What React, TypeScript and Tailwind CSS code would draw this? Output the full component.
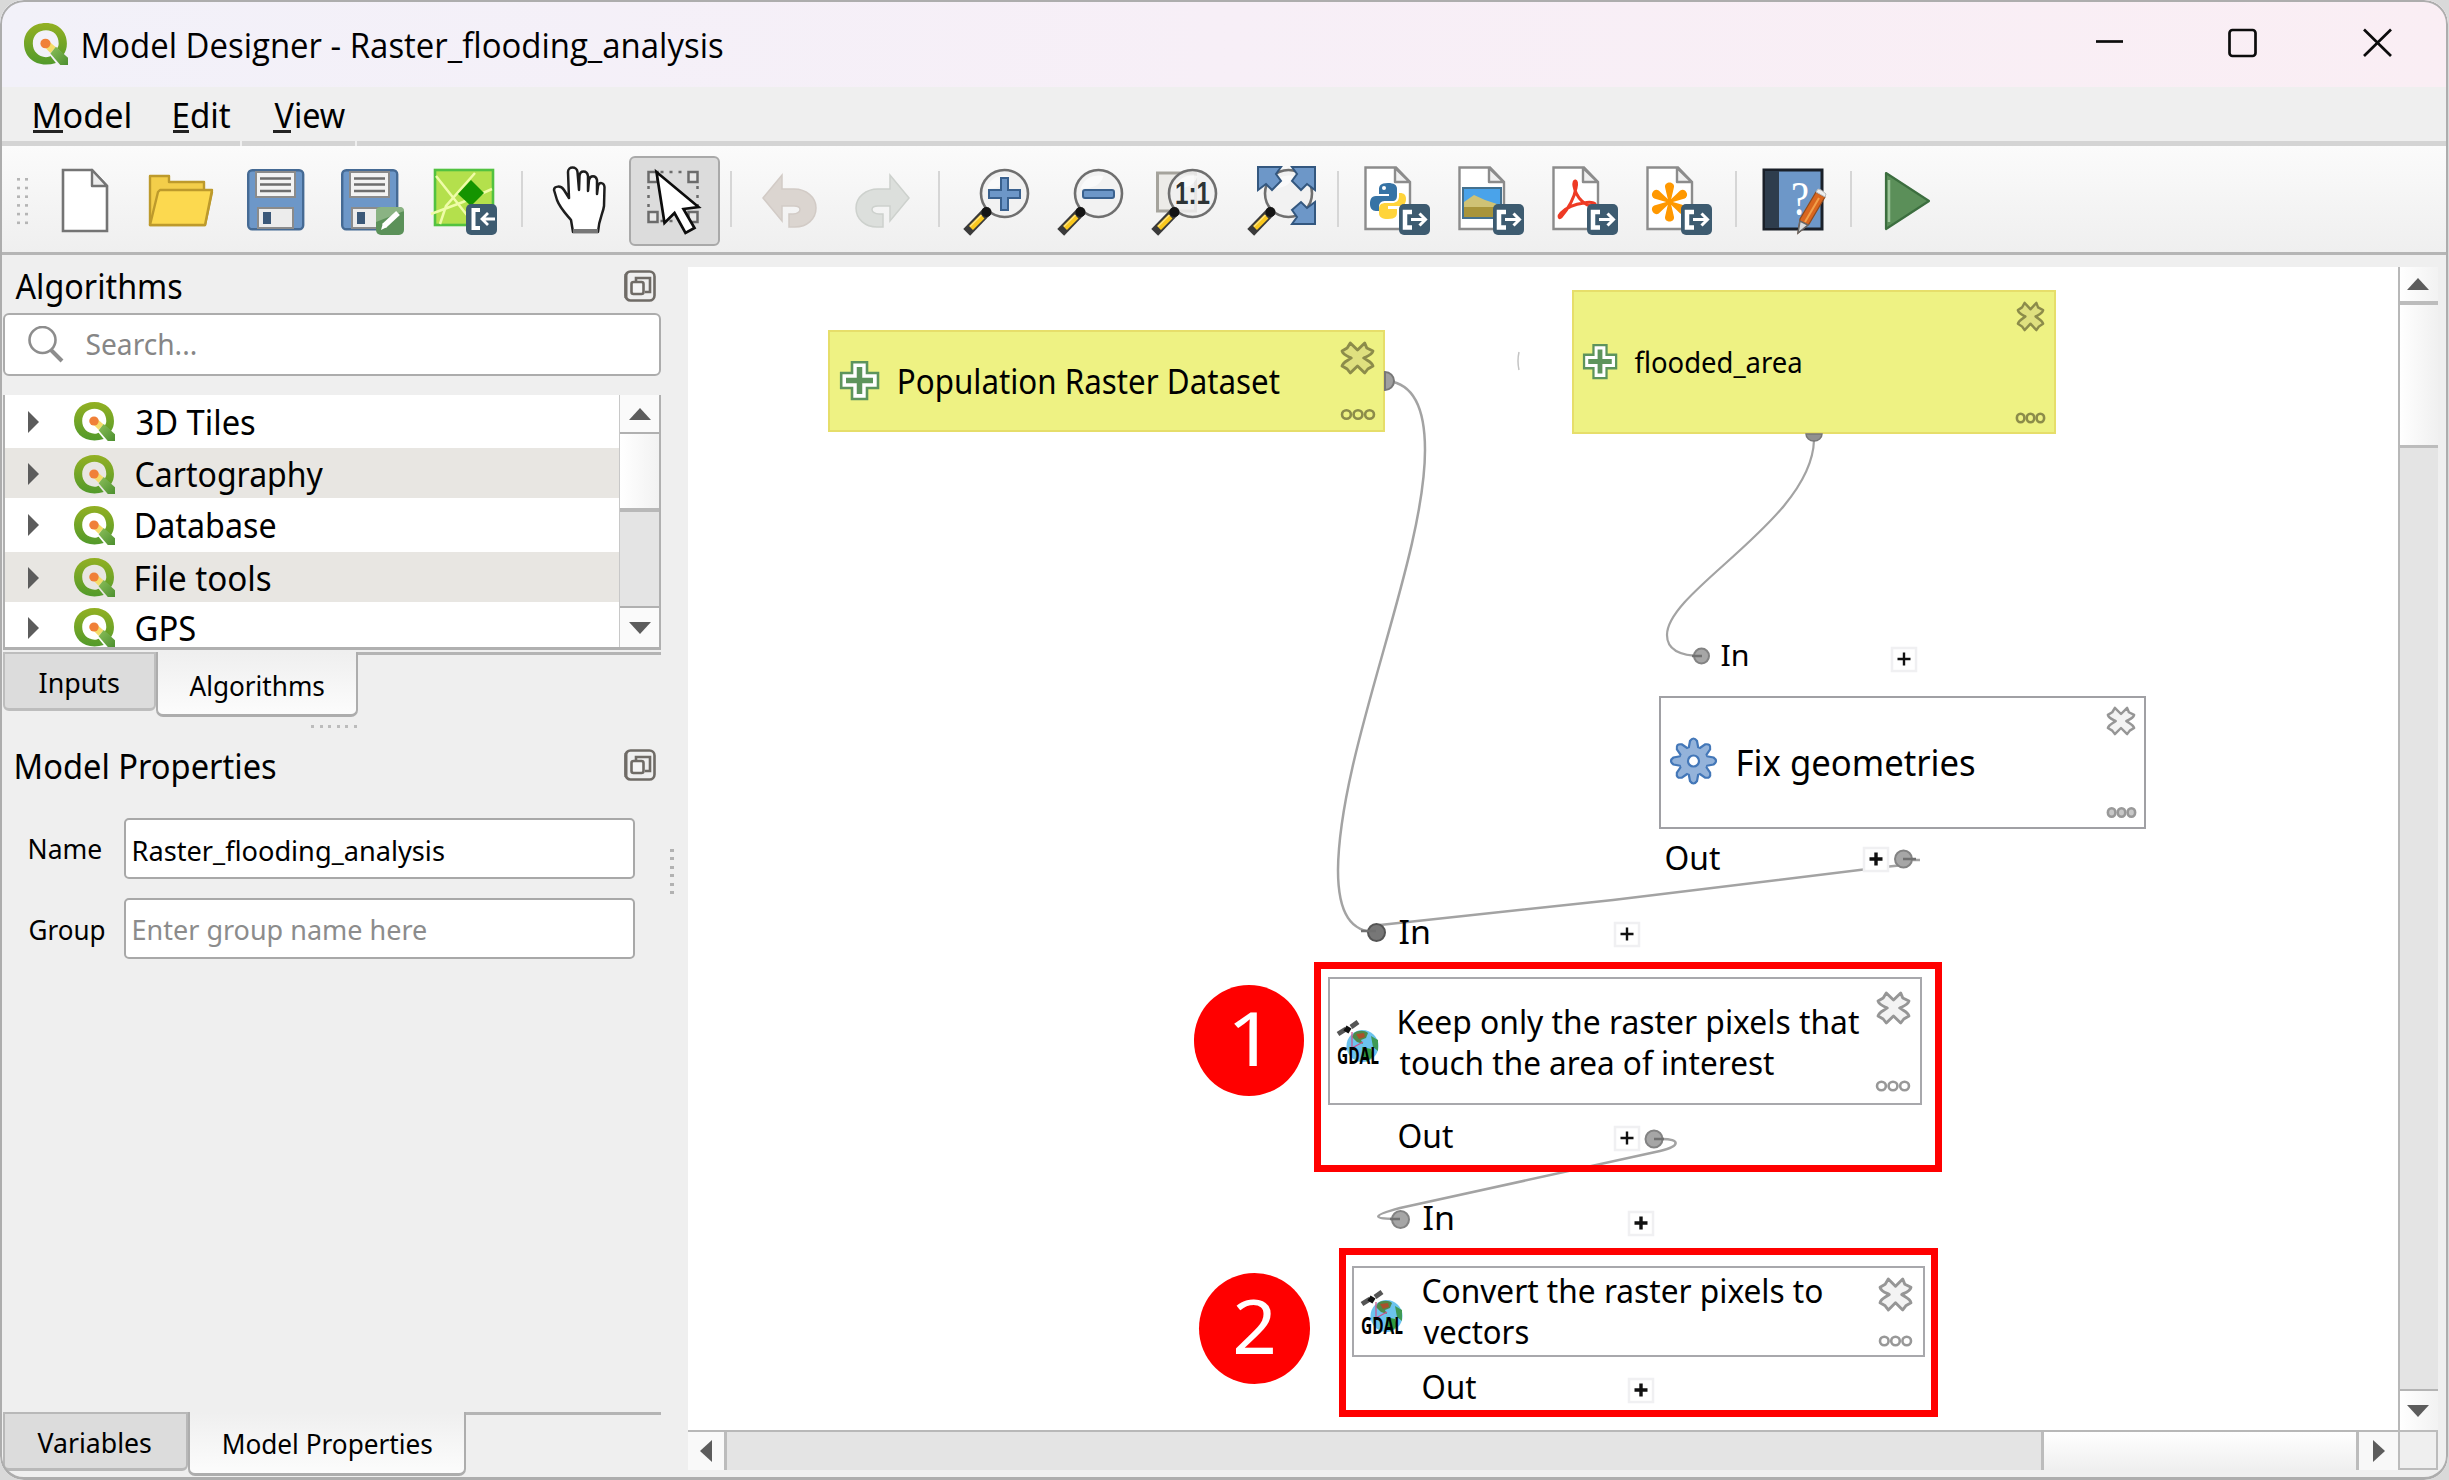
import { useLayoutEffect, useRef } from "react";
import type { ReactNode } from "react";

/* Text whose ink is fitted to an exact width. */
function Fit({ w, className = "", children }: { w: number; className?: string; children: string }) {
  const ref = useRef<HTMLSpanElement>(null);
  useLayoutEffect(() => {
    const el = ref.current;
    if (!el) return;
    const cs = getComputedStyle(el);
    const ctx = document.createElement("canvas").getContext("2d");
    if (!ctx) return;
    ctx.font = `${cs.fontWeight} ${cs.fontSize} ${cs.fontFamily}`;
    const m = ctx.measureText(children);
    const k = w / (m.actualBoundingBoxLeft + m.actualBoundingBoxRight);
    el.style.transform = `translateX(${m.actualBoundingBoxLeft * k + 1.5}px) scaleX(${k})`;
  }, [w, children]);
  return (
    <span className={`block ${className}`} style={{ width: w }}>
      <span ref={ref} className="inline-block origin-left whitespace-pre">
        {children}
      </span>
    </span>
  );
}

function QLogo({ className }: { className: string }) {
  return (
    <svg className={className} viewBox="0 0 40 40" preserveAspectRatio="none">
      <defs>
        <linearGradient id="qg" x1="0" y1="0" x2="0" y2="1">
          <stop offset="0" stopColor="#93b023" />
          <stop offset="1" stopColor="#529a2b" />
        </linearGradient>
        <linearGradient id="qt" x1="0" y1="0" x2="1" y2="1">
          <stop offset="0" stopColor="#8cbf5a" />
          <stop offset="1" stopColor="#4c8f2f" />
        </linearGradient>
      </defs>
      <path fillRule="evenodd" fill="url(#qg)" d="M20 0C31 0 39 8 39 19.500C39 24 38 27 36 30L30 24C31 23 31.500 21.500 31.500 19.500C31.500 12 27 7 20 7C13 7 8 12 8 19.500C8 27 13 32 20 32.500C22 32.500 23 32 24 31.500L29 38C26 39 23 39.500 20 39.500C8 39.500 0 31 0 19.500C0 8 8 0 20 0Z" />
      <path d="M17 17L21 16L29 23L24 28.500L17 21Z" fill="#f5dc6a" />
      <circle cx="19.500" cy="19.500" r="4.600" fill="#f08038" />
      <path d="M24 29L29 22.500L40 33V40H33Z" fill="url(#qt)" />
    </svg>
  );
}

function Slot({ x, w, children, className = "" }: { x: number; w: number; children?: ReactNode; className?: string }) {
  return (
    <svg width={w} height={106} viewBox={`${x} 146 ${w} 106`} className={`block shrink-0 ${className}`}>
      {children}
    </svg>
  );
}

function Sep() {
  return <div className="h-[56px] w-[2px] shrink-0 bg-[#d6d6d6]" />;
}

function Floppy({ x }: { x: number }) {
  return (
    <g transform={`translate(${x} 169)`}>
      <rect x="1.200" y="1.200" width="55" height="59" rx="4" fill="#6d97c8" stroke="#456a94" strokeWidth="2.400" />
      <rect x="9" y="3" width="39" height="25" fill="#f3f3f3" stroke="#8b8b8b" strokeWidth="2" />
      <path d="M13 9.500H44M13 15.500H44M13 22H44" stroke="#6e6e6e" strokeWidth="2.300" />
      <rect x="11" y="39" width="35" height="20" fill="#ececec" stroke="#8b8b8b" strokeWidth="2" />
      <rect x="16" y="43" width="8" height="12" fill="#3b5878" />
    </g>
  );
}

function Page({ x }: { x: number }) {
  return (
    <g transform={`translate(${x} 166)`}>
      <path d="M1.500 1.500H32L46 16V63H1.500Z" fill="#fff" stroke="#8c8c8c" strokeWidth="2.400" />
      <path d="M31 2V16H45.500Z" fill="#f0f0f0" stroke="#8c8c8c" strokeWidth="2.400" strokeLinejoin="round" />
    </g>
  );
}

function ExportBadge({ x }: { x: number }) {
  return (
    <g transform={`translate(${x} 204)`}>
      <rect width="31" height="31" rx="5" fill="#3d5b70" />
      <path d="M13 8H6V23.500H13" fill="none" stroke="#fff" strokeWidth="4.500" />
      <path d="M12 15.500H25M20.500 9.500L26.500 15.500L20.500 21.500" fill="none" stroke="#fff" strokeWidth="3" />
    </g>
  );
}

function Magnifier({ x, children }: { x: number; children?: ReactNode }) {
  return (
    <g transform={`translate(${x} 169)`}>
      {children}
      <ellipse cx="42" cy="24.500" rx="23.500" ry="23.500" fill="#f1f1f1" fillOpacity="0.850" stroke="#6f6f6f" strokeWidth="2.600" />
      <path d="M24 20C27 9 37 5 47 7C44 17 36 19 24 20Z" fill="#fff" opacity="0.600" />
      <path d="M22 45L7.500 60" stroke="#3a3a3a" strokeWidth="9.500" strokeLinecap="square" />
      <path d="M20 47.500L8.500 59" stroke="#fac81e" strokeWidth="5.500" />
      <path d="M19 46L7.500 57.500" stroke="#ffe27a" strokeWidth="1.500" />
      <circle cx="24" cy="43" r="5" fill="#151515" />
    </g>
  );
}

const undoPath = "M0 23L19 0V14H31C43 14 53 22 53 33C53 44 44 52 32 52H26V39H30C34 39 37 37 37 34.500C37 32 35 31 31 31H19V46Z";

function Toolbar() {
  return (
    <div className="flex h-[106px] shrink-0 items-center bg-linear-to-b from-[#fbfbfb] to-[#efefef]">
      <Slot x={0} w={46}>
        {[0, 1, 2, 3, 4, 5].map((i) => (
          <g key={i} fill="#b5b5b5">
            <rect x="17" y={178 + i * 8.700} width="3" height="2.600" />
            <rect x="25" y={178 + i * 8.700} width="3" height="2.600" />
          </g>
        ))}
      </Slot>
      <Slot x={46} w={84}>
        <path d="M63 170H92L107 186V231H63Z" fill="#fff" stroke="#747474" strokeWidth="2.600" />
        <path d="M92 170V186H107Z" fill="#ededed" stroke="#747474" strokeWidth="2.400" strokeLinejoin="round" />
      </Slot>
      <Slot x={130} w={100}>
        <path d="M150 225V176H169V182H204V192H212L205 225Z" fill="#f3ce4a" stroke="#bd9a2c" strokeWidth="2.400" strokeLinejoin="round" />
        <path d="M150 225L158 192L160 190H212L205 225Z" fill="#fcd94f" stroke="#bd9a2c" strokeWidth="2.400" strokeLinejoin="round" />
      </Slot>
      <Slot x={230} w={92}><Floppy x={247} /></Slot>
      <Slot x={322} w={96}>
        <Floppy x={341} />
        <rect x="376" y="207" width="28" height="28" rx="5" fill="#5b9159" />
        <path d="M376 222V211Q376 207 381 207H400Q404 207 404 211Z" fill="#8ab383" />
        <path d="M384 226L398 213" stroke="#fff" strokeWidth="5.500" />
        <path d="M381 230L383 223L387 227Z" fill="#fff" />
      </Slot>
      <Slot x={418} w={103}>
        <rect x="435" y="170" width="58" height="55" fill="#b4e04c" stroke="#52c240" strokeWidth="2.600" />
        <path d="M436 176L474 224M475 173L446 206L440 224M431 214L463 202L492 189" stroke="#effca8" strokeWidth="2.500" fill="none" />
        <path d="M471 180L484 193L471 206L458 194Z" fill="#159400" />
        <rect x="466" y="204" width="31" height="31" rx="5" fill="#3d5b70" />
        <path d="M480 210H473.500V228H480" fill="none" stroke="#fff" strokeWidth="4" />
        <path d="M495 219H482M488 213L482 219L488 225" fill="none" stroke="#fff" strokeWidth="2.800" />
      </Slot>
      <Sep />
      <Slot x={523} w={106}>
        <path d="M573 232L571 220C566 214 560 208 557 200L554 190C554 186 561 185 564 190L569 198L568 172C568 166 577 166 577.500 172L579 190L579.500 176C580 170 587 170 588 176L588 191L589 180C590 175 596 175 597 180L597 194L598 186C599 182 604 182 604.500 187L604 206C603 214 599 218 598 232Z" fill="#fff" stroke="#1e1e1e" strokeWidth="2.500" strokeLinejoin="round" />
        <path d="M573 231H598" stroke="#777" strokeWidth="4" />
      </Slot>
      <div className="mt-[4px] flex h-[90px] w-[91px] shrink-0 items-center justify-center rounded-[6px] border-[2.500px] border-[#a9a9a9] bg-[#dcdcdc]">
        <svg className="block shrink-0" width="86" height="86" viewBox="630.5 159 86 86">
          <path d="M659 173H686M659 222H686M647 187V210M696 187V210" stroke="#6b6b6b" strokeWidth="2.500" strokeDasharray="3 6" />
          <g fill="#e8e8e8" stroke="#6b6b6b" strokeWidth="2.500">
            <rect x="647" y="173" width="9" height="10" />
            <rect x="687" y="173" width="9" height="10" />
            <rect x="647" y="213" width="9" height="10" />
            <rect x="687" y="213" width="9" height="10" />
          </g>
          <path d="M655 173L663 224L673 214L684 234L693 229L682 210L697 208Z" fill="#fff" stroke="#0c0c0c" strokeWidth="2.700" />
        </svg>
      </div>
      <div className="w-[10px] shrink-0" />
      <Sep />
      <Slot x={732} w={206}>
        <g transform="translate(763 175)"><path d={undoPath} fill="#dbd5d0" stroke="#d2cbc6" strokeWidth="1.500" /></g>
        <g transform="translate(909 175) scale(-1 1)"><path d={undoPath} fill="#dcdfdc" stroke="#cdd1cd" strokeWidth="1.500" /></g>
      </Slot>
      <Sep />
      <Slot x={940} w={103}>
        <Magnifier x={962.5} />
        <path d="M1001 178H1008V190H1020V198H1008V210H1001V198H989V190H1001Z" fill="#6d97c8" stroke="#3a618e" strokeWidth="2" />
      </Slot>
      <Slot x={1043} w={94}>
        <Magnifier x={1056.5} />
        <rect x="1083" y="190" width="31" height="8" rx="2" fill="#6d97c8" stroke="#3a618e" strokeWidth="2" />
      </Slot>
      <Slot x={1137} w={94}>
        <Magnifier x={1150.5}>
          <rect x="7" y="4" width="38" height="38" fill="#ecebe8" stroke="#a5a39c" strokeWidth="3" />
        </Magnifier>
        <text x="1175" y="204" textLength="35" lengthAdjust="spacingAndGlyphs" className="fill-[#2d3436] font-['Liberation_Sans'] text-[31px] font-bold">1:1</text>
      </Slot>
      <Slot x={1231} w={106}>
        <Magnifier x={1246.5} />
        <g fill="#6d97c8" stroke="#33577f" strokeWidth="2">
          <path d="M1258 167H1281L1276 174L1281 181L1272 190L1266 184L1258 190Z" />
          <path d="M1315 167H1292L1297 174L1292 181L1301 190L1307 184L1315 190Z" />
          <path d="M1315 224H1292L1297 217L1292 210L1301 202L1307 208L1315 202Z" />
        </g>
      </Slot>
      <Sep />
      <Slot x={1339} w={106}>
        <Page x={1364} />
        <path d="M1388 183C1380 183 1379 186 1379 190V194H1389V196H1376C1371 196 1370 200 1370 204C1370 208 1372 211 1376 211H1379V207C1379 202 1382 201 1386 201H1392C1396 201 1397 199 1397 195V189C1397 185 1394 183 1388 183Z" fill="#3673a5" />
        <path d="M1388 219C1396 219 1397 216 1397 212V209H1388V206H1400C1405 206 1406 202 1406 199C1406 195 1404 193 1400 193H1399V196C1399 201 1396 203 1392 203H1386C1381 203 1379 205 1379 209V213C1379 217 1382 219 1388 219Z" fill="#ffd43b" />
        <circle cx="1384" cy="188" r="2" fill="#fff" />
        <ExportBadge x={1399} />
      </Slot>
      <Slot x={1445} w={94}>
        <Page x={1458} />
        <rect x="1463" y="188" width="38" height="30" fill="#4aa3ea" stroke="#44718f" strokeWidth="2" />
        <path d="M1464 202L1474 195L1485 200L1500 205V217H1464Z" fill="#cfc275" />
        <path d="M1464 207H1500V217H1464Z" fill="#a8943a" />
        <ExportBadge x={1493} />
      </Slot>
      <Slot x={1539} w={94}>
        <Page x={1552} />
        <path d="M1561 217C1567 210 1574 199 1576 188C1578 179 1573 179 1574 186C1576 198 1586 207 1594 206C1598 204 1592 201 1584 203C1575 204 1566 208 1561 213C1558 216 1559 219 1561 217Z" fill="none" stroke="#ee3a24" strokeWidth="3" />
        <ExportBadge x={1587} />
      </Slot>
      <Slot x={1633} w={102}>
        <Page x={1646} />
        <g fill="#ff9800" transform="translate(1669.500 202)">
          {[0, 60, 120, 180, 240, 300].map((a) => (
            <path key={a} d="M-1.500 -2L-4.500 -15C-5 -21 5 -21 4.500 -15L1.500 -2Z" transform={`rotate(${a})`} />
          ))}
          <circle r="3" />
        </g>
        <ExportBadge x={1681} />
      </Slot>
      <Sep />
      <Slot x={1737} w={113}>
        <rect x="1764" y="170" width="58" height="59" fill="#6d97c8" stroke="#1a2029" strokeWidth="3" />
        <rect x="1765" y="171" width="14" height="57" fill="#2e3d4d" />
        <text x="1791" y="215" textLength="18" lengthAdjust="spacingAndGlyphs" className="fill-white font-['Liberation_Serif'] text-[48px]">?</text>
        <path d="M1798 233L1800 219L1816 192L1825 197L1809 224Z" fill="#d9661f" stroke="#8f4a1c" strokeWidth="1.200" />
        <path d="M1805 222L1819 198" stroke="#f2a04a" strokeWidth="2" />
        <path d="M1816 192L1818 189Q1821 189 1826 194L1825 197Z" fill="#eee" stroke="#bbb" />
        <path d="M1798 233L1800 221L1808 225Z" fill="#dcdcdc" stroke="#666" strokeWidth="1.500" />
      </Slot>
      <Sep />
      <Slot x={1852} w={94}>
        <path d="M1886 173L1929 201L1886 229Z" fill="#5b8f59" stroke="#3c6e3f" strokeWidth="2.200" strokeLinejoin="round" />
        <path d="M1889 180V222" stroke="#9cc498" strokeWidth="2.500" />
      </Slot>
    </div>
  );
}

function FloatIcon() {
  return (
    <svg width="32" height="32" viewBox="0 0 32 32" className="block shrink-0" fill="none" stroke="#6f6b66">
      <rect x="1.500" y="1.500" width="29" height="29" rx="5" strokeWidth="2.600" />
      <path d="M2 4V28" strokeWidth="3" />
      <path d="M12 12V8H26V22H21" strokeWidth="2.600" />
      <rect x="7.500" y="12" width="12" height="12" rx="2" strokeWidth="2.600" fill="#f4f4f4" />
    </svg>
  );
}

const treeRows: { label: string; w: number; row: string }[] = [
  { label: "3D Tiles", w: 118, row: "h-[53px] bg-white" },
  { label: "Cartography", w: 187, row: "h-[50px] pt-[2px] bg-[#e8e6e2]" },
  { label: "Database", w: 139, row: "h-[54px] bg-white" },
  { label: "File tools", w: 134, row: "h-[50px] pt-[1px] bg-[#e8e6e2]" },
  { label: "GPS", w: 59, row: "h-[51px] bg-white" },
];

function Tri({ dir }: { dir: "up" | "down" | "left" | "right" }) {
  const d = { up: "M0 12L11 0L22 12Z", down: "M0 0H22L11 12Z", left: "M12 0V22L0 11Z", right: "M0 0V22L12 11Z" }[dir];
  const v = dir === "up" || dir === "down";
  return (
    <svg width={v ? 22 : 12} height={v ? 12 : 22} className="block shrink-0">
      <path d={d} fill="#5c5c5c" />
    </svg>
  );
}

function SidePanel() {
  return (
    <div className="flex w-[688px] shrink-0 flex-col pl-[3px]">
      <div className="flex h-[58px] items-end justify-between pr-[32px] pb-[11px] pl-[11px]">
        <Fit w={166} className="translate-y-[6px] text-[34px] leading-[43px]">Algorithms</Fit>
        <FloatIcon />
      </div>
      <div className="flex h-[63px] w-[658px] items-center rounded-[6px] border-[2.500px] border-[#acacac] bg-white pl-[23px]">
        <svg width="36" height="37" viewBox="0 0 36 37" fill="none" stroke="#8d8d8d" className="block">
          <circle cx="14.500" cy="14" r="13" strokeWidth="2.600" />
          <path d="M23 24L34 35" strokeWidth="4" />
        </svg>
        <Fit w={109} className="ml-[21px] -translate-y-[1px] text-[29px] leading-none text-[#868686]">Search...</Fit>
      </div>
      <div className="mt-[19px] flex h-[255px] w-[658px] border-x-2 border-b-[3px] border-[#b0b0b0] bg-white">
        <div className="flex flex-1 flex-col overflow-hidden">
          {treeRows.map((r) => (
            <div key={r.label} className={`flex shrink-0 items-center pl-[23px] ${r.row}`}>
              <svg width="11" height="22" className="block"><path d="M0 0V22L11 11Z" fill="#5c5c5c" /></svg>
              <QLogo className="ml-[35px] h-[39px] w-[41px]" />
              <Fit w={r.w} className="ml-[20px] text-[34px] leading-none">{r.label}</Fit>
            </div>
          ))}
        </div>
        <div className="flex w-[40px] flex-col border-l border-[#c8c8c8]">
          <div className="flex h-[39px] items-center justify-center border-b-2 border-[#b0b0b0] bg-[#fafafa]"><Tri dir="up" /></div>
          <div className="h-[78px] border-b-[4px] border-[#b8b8b8] bg-linear-to-r from-white to-[#f2f2f2]" />
          <div className="flex-1 bg-[#e4e4e4]" />
          <div className="flex h-[41px] items-center justify-center border-t-2 border-[#b0b0b0] bg-[#fafafa]"><Tri dir="down" /></div>
        </div>
      </div>
      <div className="mt-[2px] flex h-[65px] w-[658px] items-start">
        <div className="flex h-[59px] w-[153px] items-center rounded-b-[6px] border-2 border-b-[3px] border-[#bdbdbd] bg-[#dcdcdc] pt-[2px] pl-[33px]">
          <Fit w={80} className="text-[28px] leading-none">Inputs</Fit>
        </div>
        <div className="flex h-[65px] w-[202px] items-center rounded-b-[7px] border-x-2 border-b-[3px] border-[#adadad] bg-linear-to-b from-[#efefef] to-[#fcfcfc] pt-[3px] pl-[30px]">
          <Fit w={135} className="text-[28px] leading-none">Algorithms</Fit>
        </div>
        <div className="h-[3px] flex-1 bg-[#b4b4b4]" />
      </div>
      <div className="mt-[8px] ml-[308px] flex gap-[5.500px]">
        {[0, 1, 2, 3, 4, 5].map((i) => <div key={i} className="size-[3px] bg-[#bcbcbc]" />)}
      </div>
      <div className="mt-[20px] flex h-[34px] items-center justify-between pr-[32px] pl-[12px]">
        <Fit w={259} className="translate-y-[1px] text-[34px] leading-none">Model Properties</Fit>
        <FloatIcon />
      </div>
      <div className="mt-[36px] flex items-center">
        <div className="flex flex-col gap-[19px]">
          <div className="flex h-[61px] items-center pl-[25px]">
            <Fit w={72} className="-translate-y-[1px] text-[28px] leading-none">Name</Fit>
            <div className="ml-[24px] flex h-[61px] w-[511px] items-center rounded-[5px] border-[2.500px] border-[#a8a8a8] bg-white pl-[6px]">
              <Fit w={311} className="translate-y-[1px] text-[28px] leading-none">Raster_flooding_analysis</Fit>
            </div>
          </div>
          <div className="flex h-[61px] items-center pl-[25px]">
            <Fit w={75} className="text-[28px] leading-none">Group</Fit>
            <div className="ml-[21px] flex h-[61px] w-[511px] items-center rounded-[5px] border-[2.500px] border-[#a8a8a8] bg-white pl-[6px]">
              <Fit w={293} className="text-[28px] leading-none text-[#8c8c8c]">Enter group name here</Fit>
            </div>
          </div>
        </div>
        <div className="mb-[34px] ml-[35px] flex flex-col gap-[5.500px]">
          {[0, 1, 2, 3, 4, 5].map((i) => <div key={i} className="h-[3px] w-[4px] bg-[#b2b2b2]" />)}
        </div>
      </div>
      <div className="mt-auto mb-[3px] flex h-[65px] w-[658px] items-start">
        <div className="flex h-[59px] w-[185px] items-center rounded-b-[6px] border-2 border-b-[3px] border-[#b8b8b8] bg-[#dcdcdc] pt-[1px] pl-[31px]">
          <Fit w={114} className="text-[28px] leading-none">Variables</Fit>
        </div>
        <div className="flex h-[64px] w-[278px] items-center rounded-b-[7px] border-x-2 border-b-[3px] border-[#adadad] bg-linear-to-b from-[#efefef] to-[#fcfcfc] pt-[1px] pl-[32px]">
          <Fit w={209} className="text-[28px] leading-none">Model Properties</Fit>
        </div>
        <div className="h-[2.500px] flex-1 bg-[#b4b4b4]" />
      </div>
    </div>
  );
}

function CloseX({ x, y, w, h, c }: { x: number; y: number; w: number; h: number; c: string }) {
  return (
    <g transform={`translate(${x} ${y}) scale(${w / 32} ${h / 32})`}>
      <path d="M9 1L16 8L23 1L25 6L31 9C30 13 26 14 22 16C26 19 30 20 31 24L26 27L23 31L16 24L9 31L6 27L1 24C2 20 6 19 10 16C6 14 2 13 1 9L6 6Z" fill={c === "y" ? "#dfe07f" : "#f3f3f3"} stroke={c === "y" ? "#8c8c4a" : "#969696"} strokeWidth="2.800" strokeLinejoin="round" />
    </g>
  );
}

function Dots({ x, y, w, c, fill = "none" }: { x: number; y: number; w: number; c: string; fill?: string }) {
  return (
    <g fill={fill} stroke={c} strokeWidth="2.600">
      {[0, 1, 2].map((i) => <ellipse key={i} cx={x + w * (0.160 + i * 0.340)} cy={y} rx={w * 0.130} ry="4.300" />)}
    </g>
  );
}

function AddPort({ x, y, bold }: { x: number; y: number; bold?: boolean }) {
  return (
    <g>
      <rect x={x - 12} y={y - 11} width="24" height="23" fill="#fff" stroke="#f0f0f2" strokeWidth="2.500" />
      <path d={`M${x - 6.500} ${y}H${x + 6.500}M${x} ${y - 6.500}V${y + 6.500}`} stroke="#111" strokeWidth={bold ? 3.4 : 2.4} />
    </g>
  );
}

function PlusIcon({ x, y, w, h }: { x: number; y: number; w: number; h: number }) {
  return (
    <g transform={`translate(${x} ${y}) scale(${w / 39} ${h / 39})`}>
      <path d="M12 1.200H27V12H38V27H27V38H12V27H1.200V12H12Z" fill="#fff" stroke="#5d945c" strokeWidth="2.600" />
      <path d="M19.500 6V33M6 19.500H33" stroke="#5d945c" strokeWidth="5.500" />
    </g>
  );
}

function Gdal({ x, y }: { x: number; y: number }) {
  return (
    <g transform={`translate(${x} ${y})`}>
      <circle cx="25.500" cy="26" r="16" fill="#6cc3ee" />
      <path d="M17 13C21 10 28 10 31 13L29 18L24 20L26 24L20 22L15 17Z" fill="#4d8a4a" />
      <path d="M19 14L27 13L28 17L22 19Z" fill="#a8512c" />
      <path d="M34 16L41 20V31L36 27Z" fill="#3f9a55" />
      <path d="M25 27L34 29L36 36L30 42L26 36Z" fill="#2f9a3e" />
      <path d="M15 12V28L26 22" stroke="#d0508a" strokeWidth="1.200" fill="none" />
      <path d="M1 14L9 9M14 7L21 2" stroke="#555" strokeWidth="5" />
      <path d="M8 8L13 11" stroke="#111" strokeWidth="6" />
      <text x="0" y="43.500" textLength="42" lengthAdjust="spacingAndGlyphs" className="fill-black font-['Open_Sans'] text-[23px] font-bold">GDAL</text>
    </g>
  );
}

function Gear() {
  return (
    <g transform="translate(1693.500 761)" fill="#94b3da" stroke="#4377b8" strokeWidth="2.200">
      {[0, 45, 90, 135, 180, 225, 270, 315].map((a) => (
        <path key={a} d="M-5 -12L-3.500 -20Q0 -25 3.500 -20L5 -12" transform={`rotate(${a})`} />
      ))}
      <circle r="13.500" stroke="none" />
      <circle r="5.500" fill="#fff" />
    </g>
  );
}

function Label({ at, w, children }: { at: string; w: number; children: string }) {
  return <div className={`absolute leading-none ${at}`}><Fit w={w}>{children}</Fit></div>;
}

function Scene() {
  return (
    <div className="absolute -top-[267px] -left-[688px] h-[1480px] w-[2449px]">
      <div className="absolute top-[330px] left-[828px] h-[102px] w-[557px] border-2 border-[#e6de6a] bg-[#eef283]" />
      <div className="absolute top-[290px] left-[1572px] h-[144px] w-[484px] border-2 border-[#e6de6a] bg-[#eef283]" />
      <div className="absolute top-[696px] left-[1659px] h-[133px] w-[487px] border-2 border-[#a0a0a4] bg-white" />
      <div className="absolute top-[977px] left-[1328px] h-[128px] w-[594px] border-2 border-[#a8a8ac] bg-white" />
      <div className="absolute top-[1266px] left-[1352px] h-[91px] w-[573px] border-2 border-[#a8a8ac] bg-white" />
      <svg className="absolute inset-0" width="2449" height="1480">
        <g fill="none" stroke="#a3a3a3" strokeWidth="2.500">
          <path d="M1388 381C1414 384 1425 410 1425 450C1425 560 1339 750 1338 870C1338 915 1352 932 1376 932" />
          <path d="M1814 440C1812 520 1667 590 1667 635C1667 650 1680 656 1702 656" strokeWidth="2.200" />
          <path d="M1920 860H1903M1904 865L1884 867L1613 900L1380 925" />
          <path d="M1654 1139H1662C1680 1139 1681 1146 1660 1151L1400 1208C1370 1216 1372 1219 1400 1219" />
        </g>
        <path d="M1519 352Q1517 361 1519 370" stroke="#c4c4c4" strokeWidth="1.500" fill="none" />
        <path d="M1385 372A9 9 0 0 1 1385 390Z" fill="#a0a0a0" stroke="#777" strokeWidth="2" />
        <path d="M1806 434A8 7 0 0 0 1822 434Z" fill="#909090" stroke="#777" strokeWidth="1.500" />
        <g fill="#a6a6a6" stroke="#838383" strokeWidth="2">
          <circle cx="1701.500" cy="656" r="7.500" />
          <circle cx="1903.500" cy="859" r="8.500" />
          <circle cx="1654" cy="1139" r="8.500" />
          <circle cx="1400.500" cy="1219.500" r="8.500" />
          <circle cx="1376.500" cy="932.500" r="8.500" fill="#777" stroke="#555" />
        </g>
        <path d="M1692 656H1702M1903 859H1916M1361 931H1376M1654 1139H1664M1390 1219H1400" stroke="#707070" strokeWidth="2.500" />
        <PlusIcon x={840} y={361} w={39} h={39} />
        <PlusIcon x={1583} y={344} w={34} h={35} />
        <CloseX x={1341} y={342} w={33} h={32} c="y" />
        <CloseX x={2017} y={302} w={27} h={29} c="y" />
        <CloseX x={2107} y={707} w={28} h={28} c="g" />
        <CloseX x={1877} y={992} w={33} h={32} c="g" />
        <CloseX x={1879} y={1278} w={33} h={33} c="g" />
        <Dots x={1341} y={414.5} w={34} c="#8c8c4a" />
        <Dots x={2016} y={418} w={29} c="#8c8c4a" />
        <Dots x={2107} y={812.5} w={29} c="#999" fill="#c8c8c8" />
        <Dots x={1876} y={1086} w={34} c="#989898" />
        <Dots x={1879} y={1341} w={33} c="#989898" />
        <AddPort x={1904} y={659} />
        <AddPort x={1876} y={859} bold />
        <AddPort x={1627} y={934} />
        <AddPort x={1627} y={1138} />
        <AddPort x={1641} y={1223} bold />
        <AddPort x={1641} y={1390} bold />
        <Gear />
        <Gdal x={1337} y={1020} />
        <Gdal x={1361} y={1290} />
      </svg>
      <Label at="left-[898px] top-[363px] text-[35px]" w={380}>Population Raster Dataset</Label>
      <Label at="left-[1633px] top-[347px] text-[29px]" w={166}>flooded_area</Label>
      <Label at="left-[1720px] top-[640px] text-[29px]" w={26}>In</Label>
      <Label at="left-[1737px] top-[745px] text-[36px]" w={236}>Fix geometries</Label>
      <Label at="left-[1665px] top-[841px] text-[33px]" w={54}>Out</Label>
      <Label at="left-[1398px] top-[915px] text-[33px]" w={29}>In</Label>
      <Label at="left-[1398px] top-[1005px] text-[33px]" w={460}>Keep only the raster pixels that</Label>
      <Label at="left-[1398px] top-[1046px] text-[33px]" w={375}>touch the area of interest</Label>
      <Label at="left-[1398px] top-[1119px] text-[33px]" w={54}>Out</Label>
      <Label at="left-[1422px] top-[1201px] text-[33px]" w={29}>In</Label>
      <Label at="left-[1422px] top-[1274px] text-[33px]" w={399}>Convert the raster pixels to</Label>
      <Label at="left-[1422px] top-[1315px] text-[33px]" w={105}>vectors</Label>
      <Label at="left-[1422px] top-[1370px] text-[33px]" w={53}>Out</Label>
      <div className="absolute top-[962px] left-[1314px] h-[210px] w-[628px] border-[7px] border-[#ff0000]" />
      <div className="absolute top-[1248px] left-[1339px] h-[169px] w-[599px] border-[7px] border-[#ff0000]" />
      <div className="absolute top-[985px] left-[1194px] flex h-[111px] w-[110px] justify-center rounded-full bg-[#ff0000] pt-[16px] text-[74px] leading-none text-white">
        <Fit w={24} className="mr-[11px]">1</Fit>
      </div>
      <div className="absolute top-[1273px] left-[1199px] flex h-[111px] w-[111px] justify-center rounded-full bg-[#ff0000] pt-[16px] text-[74px] leading-none text-white">
        <Fit w={38} className="mr-[4px]">2</Fit>
      </div>
    </div>
  );
}

export default function App() {
  return (
    <div className="h-[1480px] w-[2449px] overflow-hidden bg-[#d9d9d9] font-['Noto_Sans',sans-serif] text-black">
      <div className="relative flex h-[1480px] w-[2448px] flex-col overflow-hidden rounded-[24px] bg-[#efefef]">
        <div className="flex h-[87px] shrink-0 items-center bg-linear-to-r from-[#f2f1f9] via-[#f7eff7] to-[#faeef4] pl-[24px]">
          <QLogo className="h-[42px] w-[44px]" />
          <Fit w={639} className="ml-[14px] translate-y-[1px] font-['Open_Sans'] text-[34px] leading-none">Model Designer - Raster_flooding_analysis</Fit>
          <svg className="ml-auto block" width="352" height="87" viewBox="2096 0 352 87" fill="none" stroke="#0c0c0c" strokeWidth="2.700">
            <path d="M2095 41.500H2123" />
            <rect x="2229.500" y="30" width="26" height="26" rx="3" />
            <path d="M2364 29.500L2391 56M2391 29.500L2364 56" />
          </svg>
        </div>
        <div className="flex h-[54px] shrink-0 items-center pt-[2px] pl-[33px] text-[34px] leading-none">
          <div className="w-[140px]">
            <Fit w={95}>Model</Fit>
            <div className="-mt-[2px] -mb-[1px] h-[3px] w-[30px] bg-[#222]" />
          </div>
          <div className="w-[100px]">
            <Fit w={56}>Edit</Fit>
            <div className="-mt-[2px] -mb-[1px] h-[3px] w-[16px] bg-[#222]" />
          </div>
          <div>
            <Fit w={71}>View</Fit>
            <div className="-mt-[2px] -mb-[1px] h-[3px] w-[18px] bg-[#222]" />
          </div>
        </div>
        <div className="flex h-[5px] shrink-0 gap-[2px]">
          <div className="w-[240px] bg-[#d4d4d4]" />
          <div className="w-[113px] bg-[#d4d4d4]" />
          <div className="flex-1 bg-[#d4d4d4]" />
        </div>
        <Toolbar />
        <div className="h-[3px] shrink-0 bg-[#b5b5b5]" />
        <div className="flex min-h-0 flex-1">
          <SidePanel />
          <div className="flex flex-1 flex-col pt-[12px] pr-[10px] pb-[10px]">
            <div className="flex min-h-0 flex-1">
              <div className="relative flex-1 overflow-hidden bg-white">
                <Scene />
              </div>
              <div className="flex w-[40px] flex-col border-l-2 border-[#b8b8b8]">
                <div className="flex h-[38px] items-center justify-center border-b-[4px] border-[#bcbcbc] bg-linear-to-r from-white to-[#f2f2f2] pr-[2px]"><Tri dir="up" /></div>
                <div className="h-[143px] border-b-[3px] border-[#bcbcbc] bg-linear-to-r from-white to-[#f0f0f0]" />
                <div className="flex-1 bg-[#e4e4e4]" />
                <div className="flex h-[41px] items-center justify-center border-t-2 border-[#b4b4b4] bg-linear-to-r from-white to-[#f2f2f2] pr-[2px]"><Tri dir="down" /></div>
              </div>
            </div>
            <div className="flex h-[40px] shrink-0">
              <div className="flex flex-1 border-t-2 border-[#b8b8b8]">
                <div className="flex w-[39px] items-center justify-center border-r-[3px] border-[#bcbcbc] bg-[#f9f9f9]"><Tri dir="left" /></div>
                <div className="w-[1314px] bg-[#e4e4e4]" />
                <div className="flex-1 border-x-[3px] border-[#bcbcbc] bg-linear-to-b from-white to-[#efefef]" />
                <div className="flex w-[39px] items-center justify-center bg-[#f8f8f8]"><Tri dir="right" /></div>
              </div>
              <div className="w-[40px] border-2 border-[#bcbcbc] bg-[#efefef]" />
            </div>
          </div>
        </div>
        <div className="pointer-events-none absolute inset-0 rounded-[24px] border-2 border-b-[3px] border-[#adadad]" />
      </div>
    </div>
  );
}
